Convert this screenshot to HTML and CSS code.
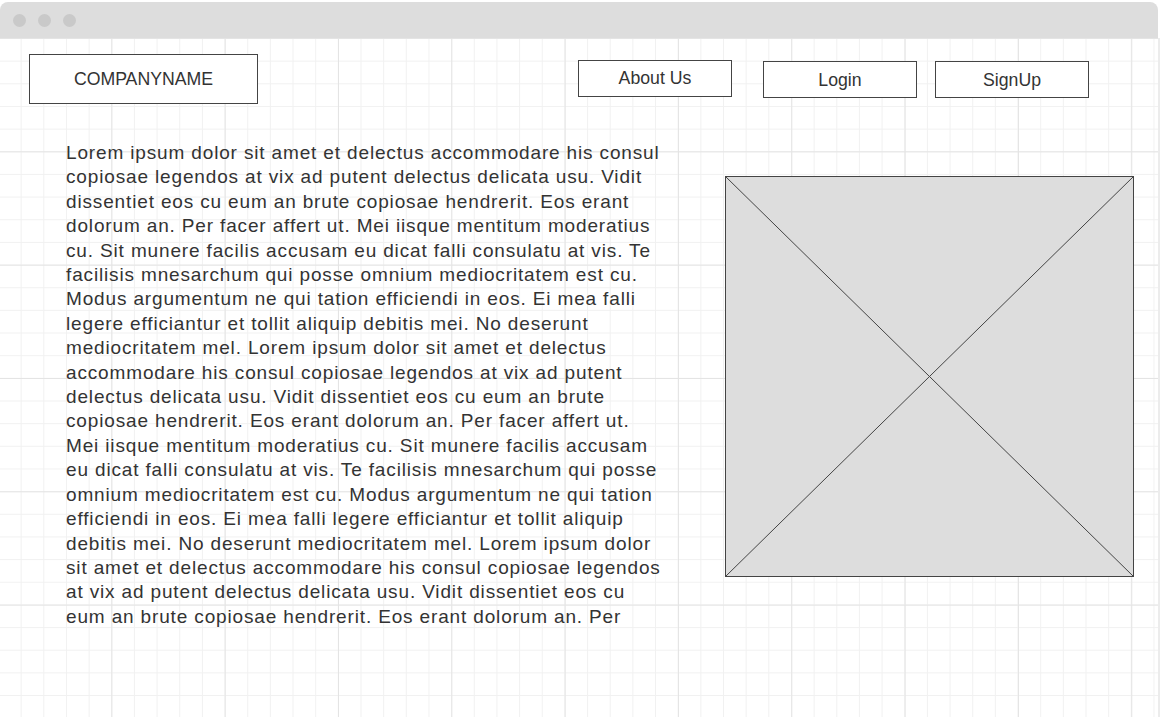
FILE: index.html
```html
<!DOCTYPE html>
<html lang="en">
<head>
<meta charset="utf-8">
<title>Wireframe</title>
<link rel="stylesheet" href="styles.css">
</head>
<body>
<div class="window">
  <div class="titlebar">
    <span class="dot"></span><span class="dot"></span><span class="dot"></span>
  </div>
  <div class="canvas">
    <header class="header">
      <div class="brand">COMPANYNAME</div>
      <nav class="nav">
        <a class="btn btn-about">About Us</a>
        <a class="btn btn-login">Login</a>
        <a class="btn btn-signup">SignUp</a>
      </nav>
    </header>
    <main class="main">
      <p class="copy">Lorem ipsum dolor sit amet et delectus accommodare his consul copiosae legendos at vix ad putent delectus delicata usu. Vidit dissentiet eos cu eum an brute copiosae hendrerit. Eos erant dolorum an. Per facer affert ut. Mei iisque mentitum moderatius cu. Sit munere facilis accusam eu dicat falli consulatu at vis. Te facilisis mnesarchum qui posse omnium mediocritatem est cu. Modus argumentum ne qui tation efficiendi in eos. Ei mea falli legere efficiantur et tollit aliquip debitis mei. No deserunt mediocritatem mel. Lorem ipsum dolor sit amet et delectus accommodare his consul copiosae legendos at vix ad putent delectus delicata usu. Vidit dissentiet eos cu eum an brute copiosae hendrerit. Eos erant dolorum an. Per facer affert ut. Mei iisque mentitum moderatius cu. Sit munere facilis accusam eu dicat falli consulatu at vis. Te facilisis mnesarchum qui posse omnium mediocritatem est cu. Modus argumentum ne qui tation efficiendi in eos. Ei mea falli legere efficiantur et tollit aliquip debitis mei. No deserunt mediocritatem mel. Lorem ipsum dolor sit amet et delectus accommodare his consul copiosae legendos at vix ad putent delectus delicata usu. Vidit dissentiet eos cu eum an brute copiosae hendrerit. Eos erant dolorum an. Per</p>
      <svg class="placeholder" viewBox="0 0 409 401" width="409" height="401" preserveAspectRatio="none">
        <rect x="0.5" y="0.5" width="408" height="400" fill="#dddddd" stroke="#444444" stroke-width="1"/>
        <line x1="0.5" y1="0.5" x2="408.5" y2="400.5" stroke="#444444" stroke-width="1"/>
        <line x1="408.5" y1="0.5" x2="0.5" y2="400.5" stroke="#444444" stroke-width="1"/>
      </svg>
    </main>
  </div>
</div>
</body>
</html>
```

FILE: styles.css
```css
html, body {
  margin: 0;
  padding: 0;
  background: #ffffff;
  overflow: hidden;
}

body {
  font-family: "Liberation Sans", Arial, sans-serif;
  color: #333333;
}

.window {
  width: 1161px;
  height: 715px;
  margin-top: 2px;
  display: flex;
  flex-direction: column;
}

.titlebar {
  width: 1158px;
  height: 36px;
  background: #dddddd;
  border-radius: 8px 8px 0 0;
  display: flex;
  align-items: center;
  gap: 12px;
  padding-left: 13px;
  box-sizing: border-box;
  flex: none;
}

.dot {
  width: 13px;
  height: 13px;
  border-radius: 50%;
  background: #c9c9c9;
}

.canvas {
  flex: 1;
  width: 1158px;
  border-right: 2px solid #ececec;
  background-color: #ffffff;
  background-image:
    linear-gradient(to right, #e4e4e4 1px, transparent 1px),
    linear-gradient(to bottom, #e4e4e4 1px, transparent 1px),
    linear-gradient(to right, #f1f1f1 1px, transparent 1px),
    linear-gradient(to bottom, #f1f1f1 1px, transparent 1px);
  background-size:
    113.33px 113.33px,
    113.33px 113.33px,
    22.667px 22.667px,
    22.667px 22.667px;
  background-position: -2px 0, -2px 0, -2px 0, -2px 0;
}

.header {
  display: flex;
  align-items: flex-start;
  padding: 16px 0 0 29px;
}

.brand {
  width: 229px;
  height: 50px;
  box-sizing: border-box;
  border: 1px solid #444444;
  background: #ffffff;
  display: flex;
  align-items: center;
  justify-content: center;
  font-size: 17.7px;
  color: #333333;
}

.nav {
  display: flex;
  align-items: flex-start;
  margin-left: 320px;
}

.btn {
  width: 154px;
  height: 37px;
  box-sizing: border-box;
  border: 1px solid #444444;
  background: #ffffff;
  display: flex;
  align-items: center;
  justify-content: center;
  font-size: 17.7px;
  color: #333333;
}

.btn-about {
  margin-top: 6px;
  padding-bottom: 1px;
}

.btn-login {
  margin-top: 7px;
  margin-left: 31px;
  padding-top: 2px;
}

.btn-signup {
  margin-top: 7px;
  margin-left: 18px;
  padding-top: 2px;
}

.main {
  display: flex;
  align-items: flex-start;
  padding-left: 66px;
}

.copy {
  width: 598px;
  margin: 37px 0 0 0;
  font-size: 19px;
  letter-spacing: 0.85px;
  line-height: 24.4px;
  color: #333333;
}

.placeholder {
  display: block;
  flex: none;
  margin-left: 61px;
  margin-top: 72px;
}
```
